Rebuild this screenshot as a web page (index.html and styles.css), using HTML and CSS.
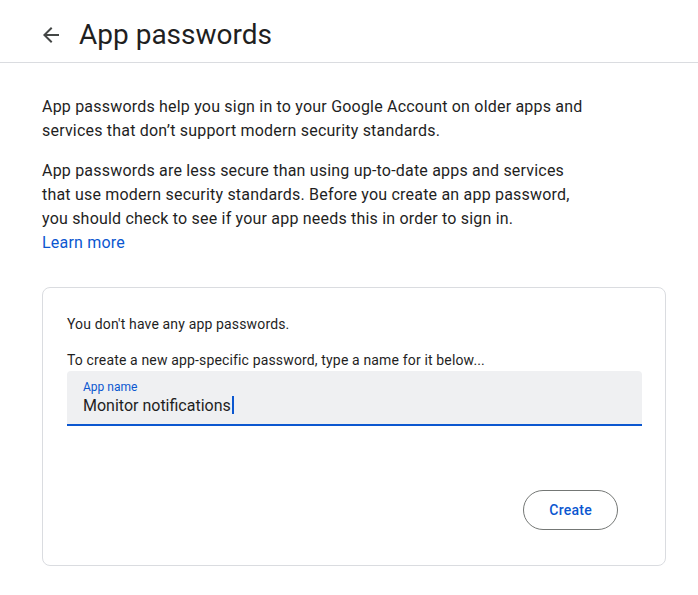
FILE: index.html
```html
<!DOCTYPE html>
<html lang="en">

<head>
  <meta charset="UTF-8">
  <meta name="viewport" content="width=device-width, initial-scale=1.0">
  <title>App passwords</title>
  <link rel="stylesheet" href="styles.css">
</head>

<body>
  <header class="page-header">
    <a class="back-btn" href="#" aria-label="Back">
      <svg width="24" height="24" viewBox="0 0 24 24">
        <path d="M20 11H7.83l5.59-5.59L12 4l-8 8 8 8 1.41-1.41L7.83 13H20v-2z" fill="#444746" />
      </svg>
    </a>
    <h1 class="page-title">App passwords</h1>
  </header>

  <main class="content">
    <p class="intro">App passwords help you sign in to your Google Account on older apps and services that don’t support modern security standards.</p>
    <p class="intro">App passwords are less secure than using up-to-date apps and services that use modern security standards. Before you create an app password, you should check to see if your app needs this in order to sign in.<br>
      <a class="link" href="#">Learn more</a></p>

    <section class="card">
      <p class="card-text">You don't have any app passwords.</p>
      <p class="card-text hint">To create a new app-specific password, type a name for it below...</p>
      <div class="field">
        <span class="field-label">App name</span>
        <span class="field-value">Monitor notifications<span class="caret"></span></span>
      </div>
      <div class="actions">
        <button class="btn-outline">Create</button>
      </div>
    </section>
  </main>
</body>

</html>
```

FILE: styles.css
```css
* {
  margin: 0;
  padding: 0;
  box-sizing: border-box;
}

body {
  font-family: Roboto, "Noto Sans", Arial, sans-serif;
  color: #1f1f1f;
  background: #fff;
}

.page-header {
  display: flex;
  align-items: center;
  height: 63px;
  padding-left: 39px;
  border-bottom: 1px solid #dadce0;
}

.back-btn {
  display: flex;
  width: 24px;
  height: 24px;
  margin-right: 16px;
  margin-top: 8px;
}

.page-title {
  font-size: 28px;
  font-weight: 400;
  line-height: 36px;
  margin-top: 8px;
}

.content {
  padding: 32px 32px 0 42px;
}

.intro {
  font-size: 16px;
  line-height: 24px;
  letter-spacing: 0.2px;
  max-width: 545px;
  margin-bottom: 16px;
}

.link {
  color: #0b57d0;
  text-decoration: none;
}

.card {
  margin-top: 32px;
  border: 1px solid #dadce0;
  border-radius: 8px;
  padding: 26px 23px 35px 24px;
}

.card-text {
  font-size: 14px;
  line-height: 20px;
  letter-spacing: 0.15px;
}

.hint {
  margin-top: 16px;
}

.field {
  display: flex;
  flex-direction: column;
  height: 55px;
  margin-top: 1px;
  padding: 8px 16px 0 16px;
  background: #eff0f2;
  border-radius: 4px 4px 0 0;
  border-bottom: 2px solid #0b57d0;
}

.field-label {
  font-size: 12px;
  line-height: 16px;
  color: #0b57d0;
}

.field-value {
  font-size: 16px;
  line-height: 22px;
}

.caret {
  display: inline-block;
  width: 2px;
  height: 18px;
  margin-left: 1px;
  vertical-align: -3px;
  background: #0b57d0;
}

.actions {
  display: flex;
  justify-content: flex-end;
  padding-right: 24px;
  margin-top: 64px;
}

.btn-outline {
  height: 40px;
  padding: 0 25px;
  border: 1px solid #747775;
  border-radius: 20px;
  background: #fff;
  color: #0b57d0;
  font-family: inherit;
  font-size: 14px;
  font-weight: 500;
  letter-spacing: 0.25px;
  cursor: pointer;
}
```
